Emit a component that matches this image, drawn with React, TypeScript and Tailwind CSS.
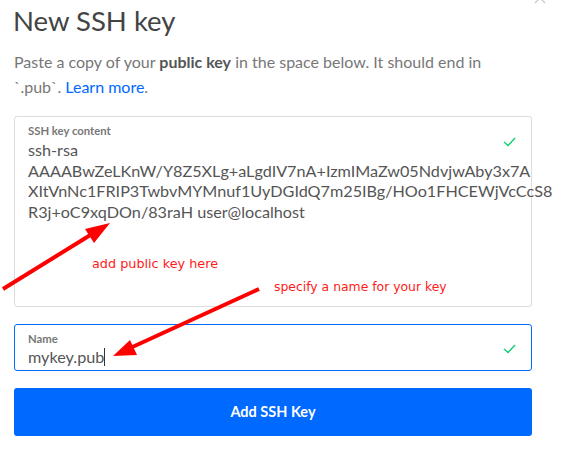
import React from "react";

function Check() {
  return (
    <svg width="13" height="10" viewBox="0 0 13 10">
      <path d="M1 5 L5 8.5 L12 1" fill="none" stroke="#15cd72" strokeWidth="1.4" />
    </svg>
  );
}

export default function App() {
  return (
    <div
      className="relative w-[565px] h-[468px] bg-white overflow-hidden"
      style={{ fontFamily: "Lato, 'Open Sans', sans-serif" }}
    >
      {/* close icon peeking at the top */}
      <svg className="absolute left-[534px] top-[-8px]" width="12" height="12" viewBox="0 0 12 12">
        <path d="M1 1 L11 11 M11 1 L1 11" stroke="#c8c8c8" strokeWidth="1.2" />
      </svg>

      <div className="pl-[14px] pr-[33px] pt-[5px]">
        <h1 className="text-[27.5px] leading-[32px] text-[#444] ml-[-1px]">New SSH key</h1>

        <p className="mt-[12px] text-[16px] leading-[25px] text-[#777]">
          Paste a copy of your <b className="font-bold text-[#555]">public key</b> in the space below. It should end in
          <br />
          `.pub`. <span className="text-[#0069ff]">Learn more</span>.
        </p>

        <div className="relative mt-[17px] h-[191px] rounded-[3px] border border-[#dcdcdc] px-[13px] pt-[7px]">
          <div className="text-[11.3px] font-bold text-[#777] leading-[14px]">SSH key content</div>
          <div className="mt-[2px] text-[16.2px] leading-[20.5px] text-[#555] whitespace-nowrap">
            <div>ssh-rsa</div>
            <div>AAAABwZeLKnW/Y8Z5XLg+aLgdIV7nA+IzmIMaZw05NdvjwAby3x7A</div>
            <div>XItVnNc1FRIP3TwbvMYMnuf1UyDGIdQ7m25IBg/HOo1FHCEWjVcCcS8</div>
            <div>R3j+oC9xqDOn/83raH user@localhost</div>
          </div>
          <div className="absolute right-[15px] top-[20px]">
            <Check />
          </div>
        </div>

        <div className="relative mt-[17px] h-[47px] rounded-[3px] border border-[#0069ff] px-[13px] pt-[7px]">
          <div className="text-[11.3px] font-bold text-[#777] leading-[14px]">Name</div>
          <div className="mt-[1px] text-[16.2px] leading-[20px] text-[#555] flex items-center">
            mykey.pub
            <span className="inline-block w-px h-[18px] bg-[#333]" />
          </div>
          <div className="absolute right-[15px] top-[19px]">
            <Check />
          </div>
        </div>

        <button className="mt-[17px] w-full h-[48px] rounded-[3px] bg-[#0069ff] text-white text-[14.5px] font-bold">
          Add SSH Key
        </button>
      </div>

      {/* annotations */}
      <svg className="absolute left-0 top-0" width="565" height="468">
        <line x1="3" y1="289" x2="92" y2="234" stroke="#ff0000" strokeWidth="4" />
        <polygon points="110,223 85,229 94,243" fill="#ff0000" />
        <line x1="259" y1="289" x2="128" y2="349" stroke="#ff0000" strokeWidth="4" />
        <polygon points="113,356 130,340 137,355" fill="#ff0000" />
      </svg>
      <div
        className="absolute left-[92px] top-[254px] text-[12.8px] text-[#ff1a1a]"
        style={{ fontFamily: "'DejaVu Sans', sans-serif" }}
      >
        add public key here
      </div>
      <div
        className="absolute left-[274px] top-[278px] text-[12.4px] text-[#ff1a1a]"
        style={{ fontFamily: "'DejaVu Sans', sans-serif" }}
      >
        specify a name for your key
      </div>
    </div>
  );
}
